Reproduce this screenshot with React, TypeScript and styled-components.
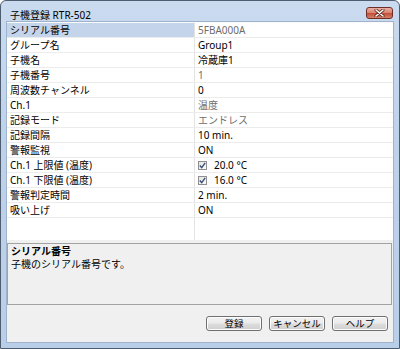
import React from 'react';
import styled, { createGlobalStyle } from 'styled-components';

const GlobalStyle = createGlobalStyle`
  html, body {
    margin: 0;
    padding: 0;
    background: #ffffff;
  }
  * {
    box-sizing: border-box;
  }
`;

const Window = styled.div`
  width: 400px;
  height: 349px;
  border: 1px solid #4f5d70;
  border-radius: 6px 6px 0 0;
  background: linear-gradient(180deg, #cadbf0 0%, #bed2ea 40%, #b9cee8 100%);
  padding: 0 5px 5px 5px;
  display: flex;
  flex-direction: column;
  font-family: 'Noto Sans', 'Noto Sans CJK JP', sans-serif;
  font-size: 10px;
  color: #000;
`;

const TitleBar = styled.div`
  height: 20px;
  display: flex;
  justify-content: space-between;
  align-items: flex-start;
  padding-left: 4px;
`;

const TitleText = styled.div`
  line-height: 14px;
  margin-top: 7px;
  font-size: 10px;
`;

const CloseButton = styled.div`
  width: 27px;
  height: 12px;
  margin-top: 6px;
  margin-right: 1px;
  border: 1px solid #6e2e26;
  border-radius: 3px;
  background: linear-gradient(180deg, #eab0a3 0%, #d98674 45%, #c4503a 55%, #d4806a 100%);
  display: flex;
  align-items: center;
  justify-content: center;
`;

const Client = styled.div`
  flex: 1;
  border: 1px solid #9fb3cd;
  background: #f0f0f0;
  display: flex;
  flex-direction: column;
`;

const Grid = styled.div`
  height: 218px;
  background: #fff;
  border-top: 1px solid #fafafa;
  display: flex;
  flex-direction: column;
`;

const Row = styled.div`
  height: 15px;
  display: flex;
  border-bottom: 1px solid #ececec;
`;

const Filler = styled.div`
  flex: 1;
  display: flex;
`;

const LabelCell = styled.div<{ $selected?: boolean }>`
  width: 188px;
  flex: none;
  padding-left: 3px;
  line-height: 14px;
  border-right: 1px solid #e3e3e3;
  background: ${(p) => (p.$selected ? '#c3d4eb' : 'transparent')};
  white-space: nowrap;
`;

const ValueCell = styled.div<{ $readonly?: boolean }>`
  flex: 1;
  padding-left: 3px;
  line-height: 14px;
  color: ${(p) => (p.$readonly ? '#6d6d6d' : '#000')};
  display: flex;
  align-items: center;
  white-space: nowrap;
`;

const CheckBox = styled.span`
  width: 9px;
  height: 9px;
  flex: none;
  margin-right: 7px;
  border: 1px solid #8f8f8f;
  background: linear-gradient(135deg, #e4e4e4 0%, #fbfbfb 100%);
  display: flex;
  align-items: center;
  justify-content: center;
`;

const Gap = styled.div`
  height: 3px;
`;

const Description = styled.div`
  height: 62px;
  margin-right: 1px;
  border: 1px solid #a2a2a2;
  background: #f0f0f0;
  padding: 1px 3px;
`;

const DescTitle = styled.div`
  font-weight: bold;
  line-height: 13px;
`;

const DescText = styled.div`
  line-height: 13px;
`;

const ButtonRow = styled.div`
  flex: 1;
  display: flex;
  justify-content: flex-end;
  align-items: flex-start;
  gap: 7px;
  padding: 11px 5px 0 0;
`;

const Button = styled.div`
  width: 56px;
  height: 15px;
  border: 1px solid #707070;
  border-radius: 3px;
  background: linear-gradient(180deg, #f2f2f2 0%, #ebebeb 48%, #dddddd 52%, #cfcfcf 100%);
  box-shadow: inset 0 0 0 1px #fcfcfc;
  display: flex;
  align-items: center;
  justify-content: center;
  font-size: 9.5px;
  line-height: 13px;
`;

const CloseIcon = () => (
  <svg width="11" height="8" viewBox="0 0 11 8">
    <path d="M2 1 L9 7 M9 1 L2 7" stroke="#5a241c" strokeWidth="3" strokeLinecap="round" />
    <path d="M2 1 L9 7 M9 1 L2 7" stroke="#ffffff" strokeWidth="1.6" strokeLinecap="round" />
  </svg>
);

const CheckMark = () => (
  <svg width="7" height="7" viewBox="0 0 7 7">
    <path d="M0.8 3.6 L2.7 5.6 L6.2 0.8" fill="none" stroke="#3a4f7d" strokeWidth="1.4" />
  </svg>
);

type Prop = {
  label: string;
  value: string;
  readonly?: boolean;
  checked?: boolean;
};

const props: Prop[] = [
  { label: 'シリアル番号', value: '5FBA000A', readonly: true },
  { label: 'グループ名', value: 'Group1' },
  { label: '子機名', value: '冷蔵庫1' },
  { label: '子機番号', value: '1', readonly: true },
  { label: '周波数チャンネル', value: '0' },
  { label: 'Ch.1', value: '温度', readonly: true },
  { label: '記録モード', value: 'エンドレス', readonly: true },
  { label: '記録間隔', value: '10 min.' },
  { label: '警報監視', value: 'ON' },
  { label: 'Ch.1 上限値 (温度)', value: '20.0 °C', checked: true },
  { label: 'Ch.1 下限値 (温度)', value: '16.0 °C', checked: true },
  { label: '警報判定時間', value: '2 min.' },
  { label: '吸い上げ', value: 'ON' },
];

const App = () => {
  return (
    <>
      <GlobalStyle />
      <Window>
        <TitleBar>
          <TitleText>子機登録 RTR-502</TitleText>
          <CloseButton>
            <CloseIcon />
          </CloseButton>
        </TitleBar>
        <Client>
          <Grid>
            {props.map((p, i) => (
              <Row key={p.label}>
                <LabelCell $selected={i === 0}>{p.label}</LabelCell>
                <ValueCell $readonly={p.readonly}>
                  {p.checked && (
                    <CheckBox>
                      <CheckMark />
                    </CheckBox>
                  )}
                  {p.value}
                </ValueCell>
              </Row>
            ))}
            <Filler>
              <LabelCell />
              <ValueCell />
            </Filler>
          </Grid>
          <Gap />
          <Description>
            <DescTitle>シリアル番号</DescTitle>
            <DescText>子機のシリアル番号です。</DescText>
          </Description>
          <ButtonRow>
            <Button>登録</Button>
            <Button>キャンセル</Button>
            <Button>ヘルプ</Button>
          </ButtonRow>
        </Client>
      </Window>
    </>
  );
};

export default App;
